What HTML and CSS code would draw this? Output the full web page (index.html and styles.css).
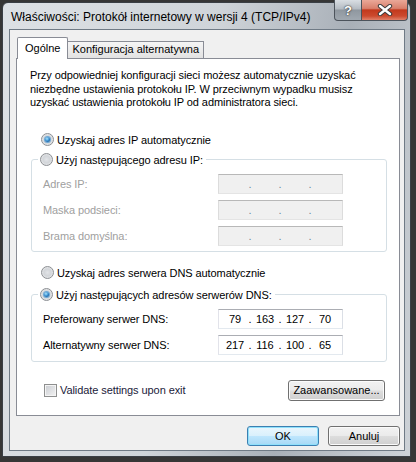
FILE: index.html
```html
<!DOCTYPE html>
<html lang="pl">
<head>
    <meta charset="UTF-8">
    <title>Właściwości: Protokół internetowy w wersji 4 (TCP/IPv4)</title>
    <link rel="stylesheet" href="styles.css">
</head>
<body>
    <div class="window">
        <div class="titlebar">
            <span class="title">Właściwości: Protokół internetowy w wersji 4 (TCP/IPv4)</span>
            <div class="caption-btns">
                <span class="cbtn help">?</span>
                <span class="cbtn close">
                    <svg width="16" height="12" viewBox="0 0 16 12">
                        <path d="M3 2 L13 10 M13 2 L3 10" stroke="#3b3b3b" stroke-width="4.4" stroke-linecap="round"/>
                        <path d="M3 2 L13 10 M13 2 L3 10" stroke="#fff" stroke-width="2.4" stroke-linecap="round"/>
                    </svg>
                </span>
            </div>
        </div>

        <div class="client">
            <div class="tabs">
                <span class="tab active">Ogólne</span>
                <span class="tab">Konfiguracja alternatywna</span>
            </div>

            <div class="panel">
                <p class="intro">Przy odpowiedniej konfiguracji sieci możesz automatycznie uzyskać<br>niezbędne ustawienia protokołu IP. W przeciwnym wypadku musisz<br>uzyskać ustawienia protokołu IP od administratora sieci.</p>

                <div class="option opt-ip"><span class="radio checked"></span>Uzyskaj adres IP automatycznie</div>

                <fieldset class="group group-ip">
                    <legend class="option"><span class="radio"></span>Użyj następującego adresu IP:</legend>
                    <div class="row disabled">
                        <span>Adres IP:</span>
                        <span class="ip"><i></i><b>.</b><i></i><b>.</b><i></i><b>.</b><i></i></span>
                    </div>
                    <div class="row disabled">
                        <span>Maska podsieci:</span>
                        <span class="ip"><i></i><b>.</b><i></i><b>.</b><i></i><b>.</b><i></i></span>
                    </div>
                    <div class="row disabled">
                        <span>Brama domyślna:</span>
                        <span class="ip"><i></i><b>.</b><i></i><b>.</b><i></i><b>.</b><i></i></span>
                    </div>
                </fieldset>

                <div class="option opt-dns"><span class="radio"></span>Uzyskaj adres serwera DNS automatycznie</div>

                <fieldset class="group group-dns">
                    <legend class="option"><span class="radio checked"></span>Użyj następujących adresów serwerów DNS:</legend>
                    <div class="row">
                        <span>Preferowany serwer DNS:</span>
                        <span class="ip"><i>79</i><b>.</b><i>163</i><b>.</b><i>127</i><b>.</b><i>70</i></span>
                    </div>
                    <div class="row">
                        <span>Alternatywny serwer DNS:</span>
                        <span class="ip"><i>217</i><b>.</b><i>116</i><b>.</b><i>100</i><b>.</b><i>65</i></span>
                    </div>
                </fieldset>

                <div class="bottom-row">
                    <label class="check-label"><span class="check"></span>Validate settings upon exit</label>
                    <button class="btn advanced">Zaawansowane...</button>
                </div>
            </div>

            <div class="actions">
                <button class="btn default">OK</button>
                <button class="btn">Anuluj</button>
            </div>
        </div>
    </div>
</body>
</html>
```

FILE: styles.css
```css
body {
    margin: 0;
    background: #363636;
    font-family: "Liberation Sans", Arial, sans-serif;
    font-size: 11px;
    color: #000;
}
.window {
    margin: 2px 0 0 2px;
    width: 407px;
    border: 1px solid #3a3f45;
    border-radius: 6px 6px 0 0;
    background: linear-gradient(100deg, #dde1e5 0%, #cfd4d9 45%, #a9b0b8 72%, #bfc5cb 88%, #cdd2d7 100%);
}
.titlebar {
    display: flex;
    height: 26px;
    padding: 0 2px 0 8px;
}
.title {
    flex: 1;
    padding-top: 7px;
    line-height: 14px;
    font-size: 12px;
}
.caption-btns {
    display: flex;
    margin-top: -3px;
    height: 21px;
}
.cbtn {
    box-sizing: border-box;
    height: 21px;
    display: flex;
    align-items: center;
    justify-content: center;
    border: 1px solid #4c535b;
    border-top: none;
}
.help {
    width: 28px;
    border-radius: 0 0 0 4px;
    background: linear-gradient(#d9dee3 0%, #b4bbc2 45%, #8f979f 50%, #a0a8b0 100%);
    color: #fff;
    font-weight: bold;
    font-size: 13px;
    text-shadow: 0 0 2px #333, 0 0 1px #222;
}
.close {
    width: 46px;
    border-left: none;
    border-radius: 0 0 4px 0;
    background: linear-gradient(#eaa898 0%, #d9806c 42%, #c2391d 50%, #cc4a2e 80%, #e0816a 100%);
}
.client {
    margin: 0 5px 5px 6px;
    padding: 7px 4px 4px 6px;
    border: 1px solid #6f7a85;
    background: #f0f0f0;
}
.tabs {
    display: flex;
    align-items: flex-end;
    height: 21px;
    margin-left: 1px;
}
.tab {
    box-sizing: border-box;
    height: 17px;
    padding: 0 4px 0 4px;
    line-height: 15px;
    border: 1px solid #898c95;
    border-bottom: none;
    border-left: none;
    background: linear-gradient(#f5f5f5, #e2e2e2);
}
.tab.active {
    position: relative;
    height: 22px;
    margin-bottom: -1px;
    padding: 0 7px;
    line-height: 20px;
    border-left: 1px solid #898c95;
    border-radius: 2px 2px 0 0;
    background: #fff;
}
.panel {
    padding: 0 12px 14px 13px;
    border: 1px solid #898c95;
    background: #fff;
    letter-spacing: -0.08px;
}
.intro {
    margin: 10px 0 0;
    line-height: 13.5px;
}
.option {
    display: flex;
    align-items: center;
    gap: 3px;
    height: 16px;
}
.opt-ip {
    margin: 22px 0 0 11px;
}
.opt-dns {
    margin: 13px 0 0 11px;
}
.radio {
    box-sizing: border-box;
    width: 13px;
    height: 13px;
    border-radius: 50%;
    border: 1px solid #8c8f93;
    background: radial-gradient(circle, #e2e4e7 0%, #d2d5d9 45%, #f6f6f6 100%);
    display: flex;
    align-items: center;
    justify-content: center;
}
.radio.checked::after {
    content: "";
    width: 5px;
    height: 5px;
    border-radius: 50%;
    background: radial-gradient(circle at 40% 35%, #a9e6ff 0%, #2a82c8 55%, #153f70 100%);
    box-shadow: 0 0 0 1px #6fa9d6;
}
.group {
    margin: 4px 0 0 1px;
    padding: 6px 0 5px 11px;
    border: 1px solid #d5dfe5;
    border-radius: 3px;
}
.group legend {
    margin-left: -5px;
    padding: 0 3px 0 2px;
}
.group-dns {
    margin-top: 6px;
    padding-bottom: 6px;
}
.row {
    display: grid;
    grid-template-columns: 175px 125px;
    align-items: center;
    height: 20px;
}
.row + .row {
    margin-top: 6px;
}
.row.disabled {
    color: #a0a0a0;
}
.ip {
    box-sizing: border-box;
    display: flex;
    align-items: center;
    height: 20px;
    padding-left: 4px;
    border: 1px solid;
    border-color: #abadb3 #dbdfe6 #e3e9ef #e2e3ea;
    background: #fff;
    color: #000;
}
.disabled .ip {
    border-color: #b8b8b8 #dcdcdc #e4e4e4 #dcdcdc;
    background: #f0f0f0;
    color: #6d8a9a;
}
.ip i {
    font-style: normal;
    width: 24px;
    text-align: center;
}
.ip b {
    font-weight: normal;
    width: 6px;
    text-align: center;
}
.bottom-row {
    display: flex;
    justify-content: space-between;
    align-items: center;
    margin-top: 18px;
    height: 21px;
}
.check-label {
    display: flex;
    align-items: center;
    gap: 3px;
    margin-left: 14px;
    color: #1a1a3a;
}
.check {
    box-sizing: border-box;
    width: 13px;
    height: 13px;
    border: 1px solid #8e8f8f;
    background: linear-gradient(135deg, #c9ccd1, #f3f3f3);
    box-shadow: inset 0 0 0 1px #f4f4f4;
}
.btn {
    box-sizing: border-box;
    height: 21px;
    padding: 0;
    border: 1px solid #707070;
    border-radius: 3px;
    background: linear-gradient(#f2f2f2 0%, #ebebeb 49%, #dddddd 51%, #cfcfcf 100%);
    box-shadow: inset 0 0 0 1px #fbfbfb;
    font: inherit;
    color: #000;
}
.advanced {
    width: 97px;
    margin-right: 2px;
}
.actions {
    display: flex;
    justify-content: flex-end;
    gap: 9px;
    margin-top: 10px;
}
.actions .btn {
    width: 72px;
    height: 20px;
}
.btn.default {
    border-color: #3c7fb1;
    background: linear-gradient(#eaf6fd 0%, #d9f0fc 49%, #bee6fd 51%, #a7d9f5 100%);
    box-shadow: inset 0 0 0 1px #8fe0fb;
}
```
